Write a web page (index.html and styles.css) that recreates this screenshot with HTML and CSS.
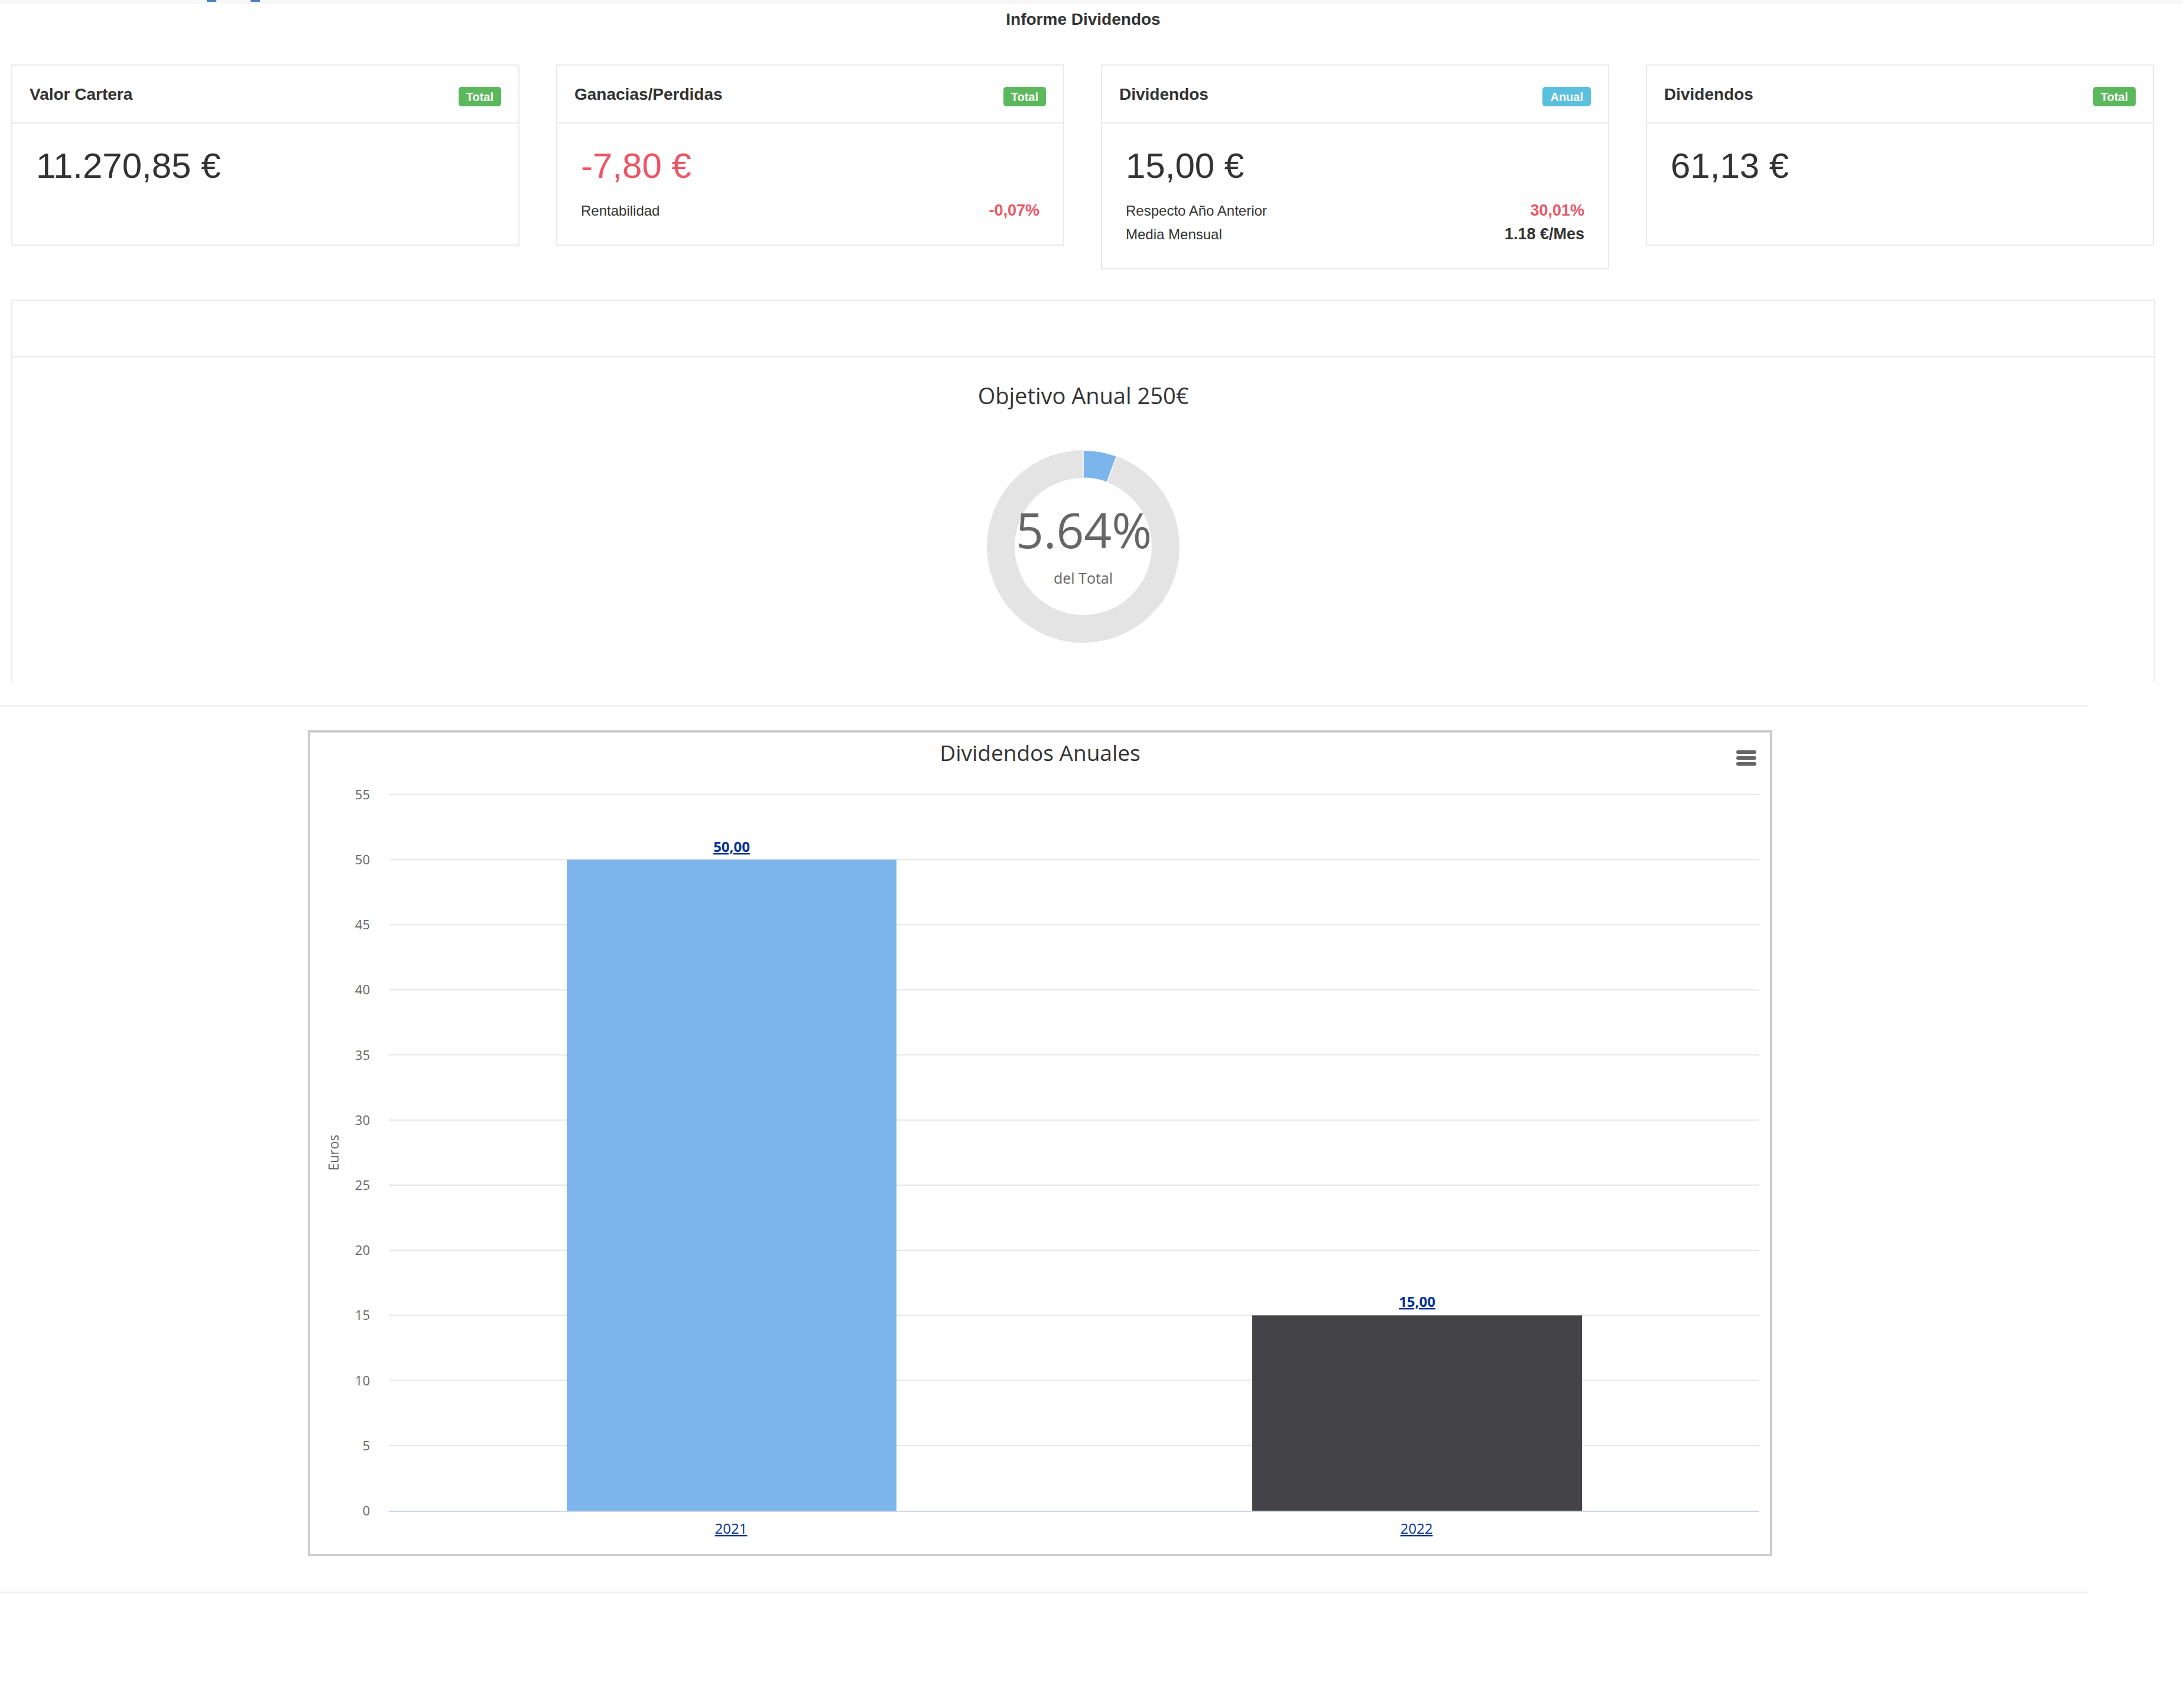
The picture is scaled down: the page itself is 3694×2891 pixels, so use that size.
FILE: index.html
```html
<!DOCTYPE html>
<html lang="es">
<head>
    <meta charset="UTF-8">
    <meta name="viewport" content="width=device-width, initial-scale=1.0">
    <title>Informe Dividendos</title>
    <link rel="stylesheet" href="styles.css">
</head>
<body>
    <div class="topbar">
        <span class="nav-mark"></span>
        <span class="nav-mark"></span>
    </div>

    <div class="wrapper">
        <h1 class="page-title">Informe Dividendos</h1>

        <!-- resumen -->
        <div class="cards">
            <div class="card">
                <div class="card-head">
                    <h5>Valor Cartera</h5>
                    <span class="badge badge-total">Total</span>
                </div>
                <div class="card-body">
                    <div class="big">11.270,85 €</div>
                </div>
            </div>

            <div class="card">
                <div class="card-head">
                    <h5>Ganacias/Perdidas</h5>
                    <span class="badge badge-total">Total</span>
                </div>
                <div class="card-body">
                    <div class="big negative">-7,80 €</div>
                    <div class="stats">
                        <div class="stat-row">
                            <span>Rentabilidad</span>
                            <span class="value negative">-0,07%</span>
                        </div>
                    </div>
                </div>
            </div>

            <div class="card">
                <div class="card-head">
                    <h5>Dividendos</h5>
                    <span class="badge badge-anual">Anual</span>
                </div>
                <div class="card-body">
                    <div class="big">15,00 €</div>
                    <div class="stats">
                        <div class="stat-row">
                            <span>Respecto Año Anterior</span>
                            <span class="value negative">30,01%</span>
                        </div>
                        <div class="stat-row">
                            <span>Media Mensual</span>
                            <span class="value">1.18 €/Mes</span>
                        </div>
                    </div>
                </div>
            </div>

            <div class="card">
                <div class="card-head">
                    <h5>Dividendos</h5>
                    <span class="badge badge-total">Total</span>
                </div>
                <div class="card-body">
                    <div class="big">61,13 €</div>
                </div>
            </div>
        </div>

        <!-- objetivo anual -->
        <div class="panel">
            <div class="panel-head"></div>
            <div class="panel-body">
                <div class="chart-title">Objetivo Anual 250€</div>
                <svg class="donut" width="326" height="326" viewBox="0 0 326 326">
                    <circle cx="163" cy="163" r="139.5" fill="none" stroke="#e4e4e4" stroke-width="47"/>
                    <path d="M163 0 A163 163 0 0 1 219.55 10.12 L203.24 54.2 A116 116 0 0 0 163 47 Z" fill="#7cb5ec" stroke="#fff" stroke-width="1.5"/>
                    <text class="donut-value" x="164" y="166" text-anchor="middle">5.64%</text>
                    <text class="donut-label" x="163" y="226" text-anchor="middle">del Total</text>
                </svg>
            </div>
        </div>
    </div>

    <hr class="divider">

    <!-- dividendos anuales -->
    <div class="bar-chart">
        <svg width="2470" height="1390" viewBox="0 0 2470 1390">
            <text class="bc-title" x="1235" y="48" text-anchor="middle">Dividendos Anuales</text>

            <g class="menu-icon">
                <rect x="2413" y="30" width="34" height="6" rx="3"/>
                <rect x="2413" y="40" width="34" height="6" rx="3"/>
                <rect x="2413" y="50" width="34" height="6" rx="3"/>
            </g>

            <g class="grid">
                <line x1="133" x2="2452" y1="104.8" y2="104.8"/>
                <line x1="133" x2="2452" y1="215" y2="215"/>
                <line x1="133" x2="2452" y1="325.2" y2="325.2"/>
                <line x1="133" x2="2452" y1="435.4" y2="435.4"/>
                <line x1="133" x2="2452" y1="545.6" y2="545.6"/>
                <line x1="133" x2="2452" y1="655.8" y2="655.8"/>
                <line x1="133" x2="2452" y1="766" y2="766"/>
                <line x1="133" x2="2452" y1="876.2" y2="876.2"/>
                <line x1="133" x2="2452" y1="986.4" y2="986.4"/>
                <line x1="133" x2="2452" y1="1096.6" y2="1096.6"/>
                <line x1="133" x2="2452" y1="1206.8" y2="1206.8"/>
            </g>

            <g class="y-labels" text-anchor="end">
                <text x="101" y="112.8">55</text>
                <text x="101" y="223">50</text>
                <text x="101" y="333.2">45</text>
                <text x="101" y="443.4">40</text>
                <text x="101" y="553.6">35</text>
                <text x="101" y="663.8">30</text>
                <text x="101" y="774">25</text>
                <text x="101" y="884.2">20</text>
                <text x="101" y="994.4">15</text>
                <text x="101" y="1104.6">10</text>
                <text x="101" y="1214.8">5</text>
                <text x="101" y="1325">0</text>
            </g>

            <text class="axis-title" transform="translate(48 711) rotate(-90)" text-anchor="middle">Euros</text>

            <rect x="434" y="215" width="558" height="1102" fill="#7cb5ec"/>
            <rect x="1594" y="986.4" width="558" height="330.6" fill="#434348"/>

            <line class="zero-line" x1="133" x2="2452" y1="1318" y2="1318"/>

            <g class="link-label data-label" text-anchor="middle">
                <text x="713" y="202">50,00</text>
                <text x="1873" y="972">15,00</text>
            </g>

            <g class="link-label" text-anchor="middle">
                <text x="712" y="1356">2021</text>
                <text x="1872" y="1356">2022</text>
            </g>
        </svg>
    </div>

    <hr class="divider divider-bottom">
</body>
</html>
```

FILE: styles.css
```css
body {
    margin: 0;
    font-family: "Liberation Sans", Arial, sans-serif;
    color: #333;
    background-color: #fff;
}
.topbar {
    display: flex;
    gap: 58px;
    height: 7px;
    padding-left: 350px;
    background-color: #f7f7f7;
}
.nav-mark {
    width: 16px;
    height: 3px;
    background-color: #4a7fc1;
}
.wrapper {
    padding: 0 47px 0 19px;
}
.page-title {
    margin: 10px 0 0;
    font-size: 28px;
    line-height: 32px;
    font-weight: bold;
    text-align: center;
    color: #333;
}
.cards {
    display: flex;
    align-items: flex-start;
    gap: 62px;
    margin-top: 60px;
    margin-bottom: 51px;
}
.card {
    flex: 0 0 860px;
    box-sizing: border-box;
    border: 2px solid #e7eaec;
    border-radius: 2px;
    background-color: #fff;
}
.card-head {
    display: flex;
    justify-content: space-between;
    align-items: flex-start;
    box-sizing: border-box;
    height: 98px;
    padding: 34px 29px 0;
    border-bottom: 2px solid #e7eaec;
}
.card-head h5 {
    margin: 0;
    font-size: 28px;
    line-height: 30px;
    font-weight: bold;
    color: #333;
}
.badge {
    margin-top: 2px;
    padding: 0 13px;
    height: 33px;
    line-height: 34px;
    font-size: 20px;
    font-weight: bold;
    color: #fff;
    border-radius: 5px;
}
.badge-total {
    background-color: #5cb85c;
}
.badge-anual {
    background-color: #5bc0de;
}
.card-body {
    box-sizing: border-box;
    min-height: 205px;
    padding: 40px 40px 37px;
}
.big {
    font-size: 60px;
    line-height: 64px;
    color: #333;
}
.negative {
    color: #ed5565;
}
.stats {
    margin-top: 24px;
}
.stat-row {
    display: flex;
    justify-content: space-between;
    align-items: baseline;
    height: 40px;
    font-size: 24px;
    line-height: 40px;
}
.stat-row .value {
    font-size: 27px;
    line-height: 27px;
    font-weight: bold;
}
.panel {
    border: 2px solid #e7eaec;
    border-bottom: none;
}
.panel-head {
    height: 94px;
    border-bottom: 2px solid #e7eaec;
}
.panel-body {
    display: flex;
    flex-direction: column;
    align-items: center;
    height: 550px;
    box-sizing: border-box;
    padding-top: 42px;
}
.chart-title {
    font-family: "Open Sans", sans-serif;
    font-size: 38px;
    line-height: 44px;
    color: #333;
}
.donut {
    display: block;
    margin-top: 71px;
}
.donut-value {
    font-family: "Open Sans", sans-serif;
    font-size: 82px;
    fill: #666;
}
.donut-label {
    font-family: "Open Sans", sans-serif;
    font-size: 25px;
    fill: #666;
}
.divider {
    width: 3534px;
    height: 2px;
    margin: 39px 0 0;
    border: none;
    background-color: #eee;
}
.divider-bottom {
    margin-top: 60px;
}
.bar-chart {
    width: 2470px;
    margin: 40px 0 0 521px;
    border: 4px solid #ccc;
    background-color: #fff;
}
.bar-chart svg {
    display: block;
    font-family: "Open Sans", sans-serif;
}
.bc-title {
    font-size: 37px;
    fill: #333;
}
.menu-icon rect {
    fill: #666;
}
.grid line {
    stroke: #e6e6e6;
    stroke-width: 2;
}
.zero-line {
    stroke: #ccd6eb;
    stroke-width: 2;
}
.y-labels text {
    font-size: 22px;
    fill: #666;
}
.axis-title {
    font-size: 23px;
    fill: #666;
}
.link-label text {
    font-size: 24px;
    fill: #003399;
    text-decoration: underline;
}
.data-label text {
    font-weight: bold;
}
```
